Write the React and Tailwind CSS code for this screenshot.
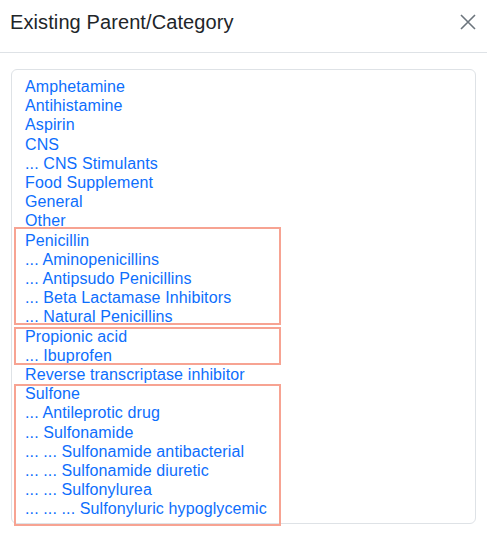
import React from 'react'

const groups = [
  { items: ['Amphetamine', 'Antihistamine', 'Aspirin', 'CNS', '... CNS Stimulants', 'Food Supplement', 'General', 'Other'] },
  {
    box: 'top-[-4px] bottom-[2px]',
    items: ['Penicillin', '... Aminopenicillins', '... Antipsudo Penicillins', '... Beta Lactamase Inhibitors', '... Natural Penicillins'],
  },
  { box: 'top-[0px] bottom-[0px]', items: ['Propionic acid', '... Ibuprofen'] },
  { items: ['Reverse transcriptase inhibitor'] },
  {
    box: 'top-[0px] bottom-[-7px]',
    items: [
      'Sulfone',
      '... Antileprotic drug',
      '... Sulfonamide',
      '... ... Sulfonamide antibacterial',
      '... ... Sulfonamide diuretic',
      '... ... Sulfonylurea',
      '... ... ... Sulfonyluric hypoglycemic',
    ],
  },
]

function App() {
  return (
    <div className="w-[487px] h-[535px] bg-white overflow-hidden" style={{ fontFamily: '"Liberation Sans", Arial, sans-serif' }}>
      {/* Header */}
      <div className="h-[53px] border-b border-[#dee2e6] pl-[10px] pr-[11px] flex items-center justify-between">
        <h5 className="text-[20px] font-medium leading-[1.2] text-[#212529] -mt-[8px] tracking-[0.1px]">Existing Parent/Category</h5>
        <button className="w-[16px] h-[16px] -mt-[9px] text-[#6c757d]">
          <svg viewBox="0 0 16 16" width="16" height="16" fill="none" stroke="currentColor" strokeWidth="1.6">
            <path d="M1 1l14 14M15 1L1 15" />
          </svg>
        </button>
      </div>

      {/* Body */}
      <div className="pt-[16px] px-[11px]">
        <div className="h-[455px] border border-[#dee2e6] rounded-[6px] pt-[7px] pl-[13px] text-[16px] leading-[19.2px] tracking-[0.12px] text-[#0d6efd]">
          {groups.map((g, gi) => (
            <div key={gi} className="relative">
              {g.box && (
                <div className={`absolute left-[-11px] w-[267px] border-2 border-[#f7a392] ${g.box}`} />
              )}
              {g.items.map((item) => (
                <div key={item} className="whitespace-pre">{item}</div>
              ))}
            </div>
          ))}
        </div>
      </div>
    </div>
  )
}

export default App
